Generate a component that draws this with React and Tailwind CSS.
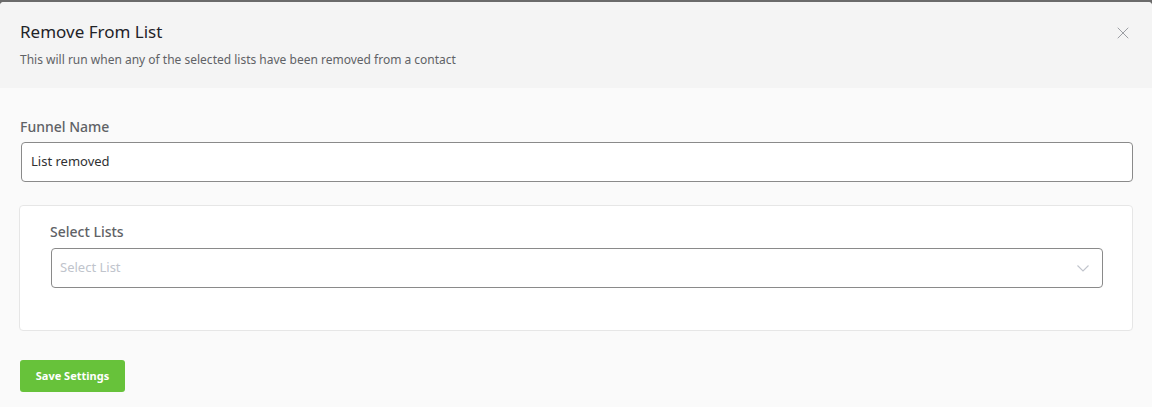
import { X } from 'lucide-react'

export default function App() {
  return (
    <div className="min-h-screen bg-[#6b6b6b] pt-[2px] font-['Noto_Sans',sans-serif]">
      <div className="rounded-t-[4px] overflow-hidden bg-[#fafafa] min-h-[405px]">
        {/* Header */}
        <div className="bg-[#f4f4f4] h-[86px] px-5 pt-[18px] flex justify-between">
          <div>
            <h2 className="text-[17px] leading-6 text-[#1f2328] font-normal">Remove From List</h2>
            <p className="mt-[8px] text-[12px] leading-4 text-[#606266]">
              This will run when any of the selected lists have been removed from a contact
            </p>
          </div>
          <button className="text-[#8a8d93] h-5 mt-[3px] mr-[-1px]">
            <X size={20} strokeWidth={1} />
          </button>
        </div>

        {/* Body */}
        <div className="px-5 pt-[29px]">
          <label className="block text-[14px] leading-5 font-medium text-[#606266]">Funnel Name</label>
          <div className="mt-[5px] ml-px -mr-px h-10 border border-[#8a8a8a] rounded-[4px] bg-white flex items-center px-[9px] text-[13px] text-[#303133]">
            List removed
          </div>

          <div className="mt-[23px] -mx-px border border-[#e6e6e6] rounded-[4px] bg-white px-[30px] pt-[16px] pb-[42px]">
            <label className="block text-[14px] leading-5 font-medium text-[#606266]">Select Lists</label>
            <div className="mt-[6px] ml-px -mr-px h-10 border border-[#8a8a8a] rounded-[4px] bg-white flex items-center justify-between pl-2 pr-[12px] text-[13px] text-[#c0c4cc]">
              <span>Select List</span>
              <svg width="12" height="7" viewBox="0 0 12 7" fill="none" className="mr-px">
                <path d="M0.5 0.5 6 6 11.5 0.5" stroke="#c0c4cc" strokeWidth="1.1" />
              </svg>
            </div>
          </div>

          <button className="mt-[29px] h-8 w-[105px] rounded-[3px] bg-[#67c23a] text-white text-[11px] font-bold">
            Save Settings
          </button>
        </div>
      </div>
    </div>
  )
}
